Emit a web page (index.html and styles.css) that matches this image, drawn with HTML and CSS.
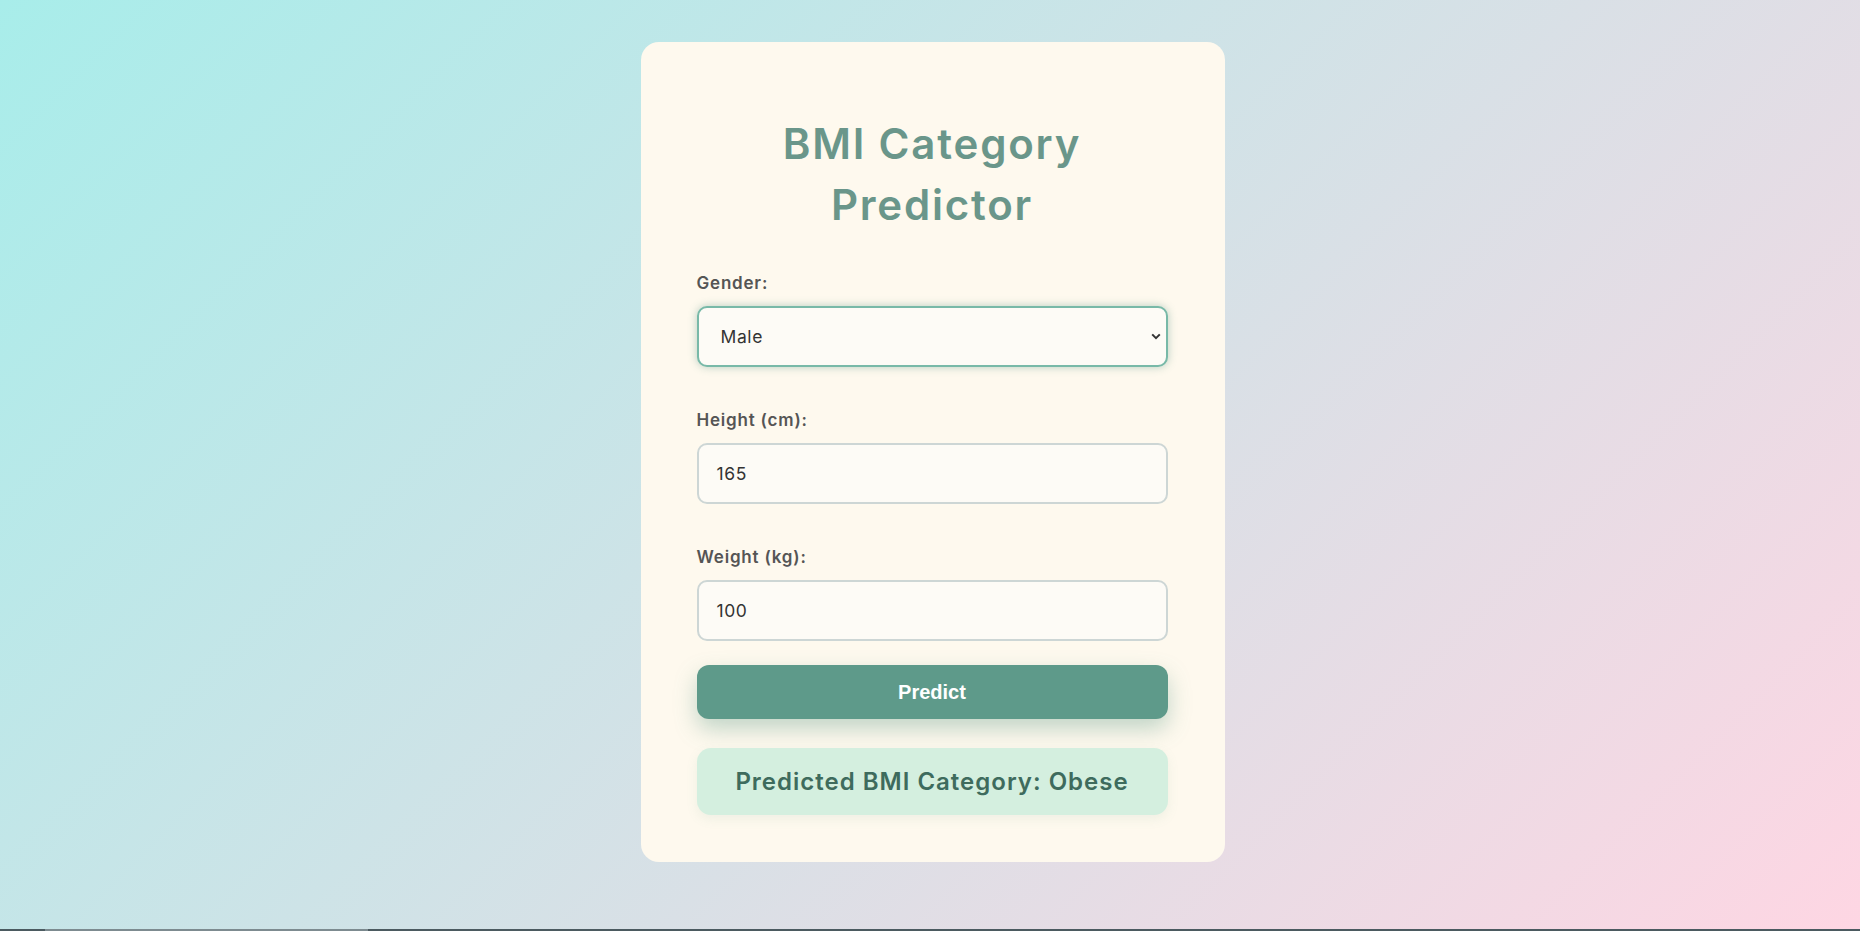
FILE: index.html
```html
<!DOCTYPE html>
<html lang="en">
<head>
<meta charset="UTF-8">
<title>BMI Category Predictor</title>
<link rel="stylesheet" href="styles.css">
</head>
<body>
<main class="page">
  <section class="card">
    <h1 class="title">BMI Category<br>Predictor</h1>
    <form class="form">
      <div class="field">
        <label class="label" for="gender">Gender:</label>
        <div class="control control-focus" id="gender">Male
          <svg class="chevron" width="10" height="7" viewBox="0 0 10 7"><path d="M1.2 1.4 L5 5.2 L8.8 1.4" fill="none" stroke="#333" stroke-width="2"/></svg>
        </div>
      </div>
      <div class="field">
        <label class="label" for="height">Height (cm):</label>
        <div class="control" id="height">165</div>
      </div>
      <div class="field field-last">
        <label class="label" for="weight">Weight (kg):</label>
        <div class="control" id="weight">100</div>
      </div>
      <button type="button" class="btn">Predict</button>
    </form>
    <div class="result">Predicted BMI Category: Obese</div>
  </section>
</main>
<div class="hscroll"><div class="hscroll-thumb"></div></div>
</body>
</html>
```
FILE: styles.css
```css
* { box-sizing: border-box; }
html, body { margin: 0; padding: 0; }
body {
  font-family: "Inter", "Open Sans", sans-serif;
  background: linear-gradient(135deg, #a8edea 0%, #fed6e3 100%);
  height: 931px;
  overflow: hidden;
}
.page {
  display: flex;
  justify-content: center;
  padding-top: 42px;
  padding-left: 5px;
}
.card {
  width: 584px;
  height: 820px;
  background: #fef9ee;
  border-radius: 18px;
  padding: 71px 57px 0 56px;
  display: flex;
  flex-direction: column;
}
.title {
  margin: 0;
  text-align: center;
  font-size: 42px;
  line-height: 61px;
  font-weight: 600;
  color: #6a968a;
  letter-spacing: 1.8px;
}
.form {
  display: flex;
  flex-direction: column;
  margin-top: 36px;
}
.field { display: flex; flex-direction: column; margin-bottom: 41px; }
.field-last { margin-bottom: 24px; }
.label {
  font-size: 17px;
  font-weight: 600;
  color: #555;
  line-height: 24px;
  margin-bottom: 11px;
  letter-spacing: 0.8px;
}
.control {
  height: 61px;
  border: 2px solid #cdd6d5;
  border-radius: 10px;
  background: #fdfbf6;
  font-size: 17.5px;
  color: #333;
  padding: 0 18px;
  display: flex;
  align-items: center;
  letter-spacing: 0.6px;
}
.control-focus {
  border-color: #78b9a8;
  box-shadow: 0 0 8px rgba(94, 154, 138, 0.45);
  padding-left: 22px;
  padding-right: 5px;
  justify-content: space-between;
}
.chevron { display: block; }
.btn {
  height: 54px;
  border: none;
  border-radius: 12px;
  background: #5e9a8a;
  color: #fff;
  font-family: "Liberation Sans", Arial, sans-serif;
  font-weight: 700;
  font-size: 20px;
  box-shadow: 0 10px 22px rgba(94, 154, 138, 0.38);
  padding: 0;
}
.result {
  margin-top: 29px;
  height: 67px;
  border-radius: 14px;
  background: #d4efdf;
  color: #3e6b5d;
  font-size: 24px;
  font-weight: 600;
  display: flex;
  align-items: center;
  justify-content: center;
  letter-spacing: 1px;
  box-shadow: 0 4px 12px rgba(94, 154, 138, 0.1);
}
.hscroll {
  position: fixed;
  left: 0;
  right: 0;
  bottom: 0;
  height: 2px;
  background: #4b5a60;
}
.hscroll-thumb {
  margin-left: 45px;
  width: 323px;
  height: 2px;
  background: #7d8b90;
}
```
